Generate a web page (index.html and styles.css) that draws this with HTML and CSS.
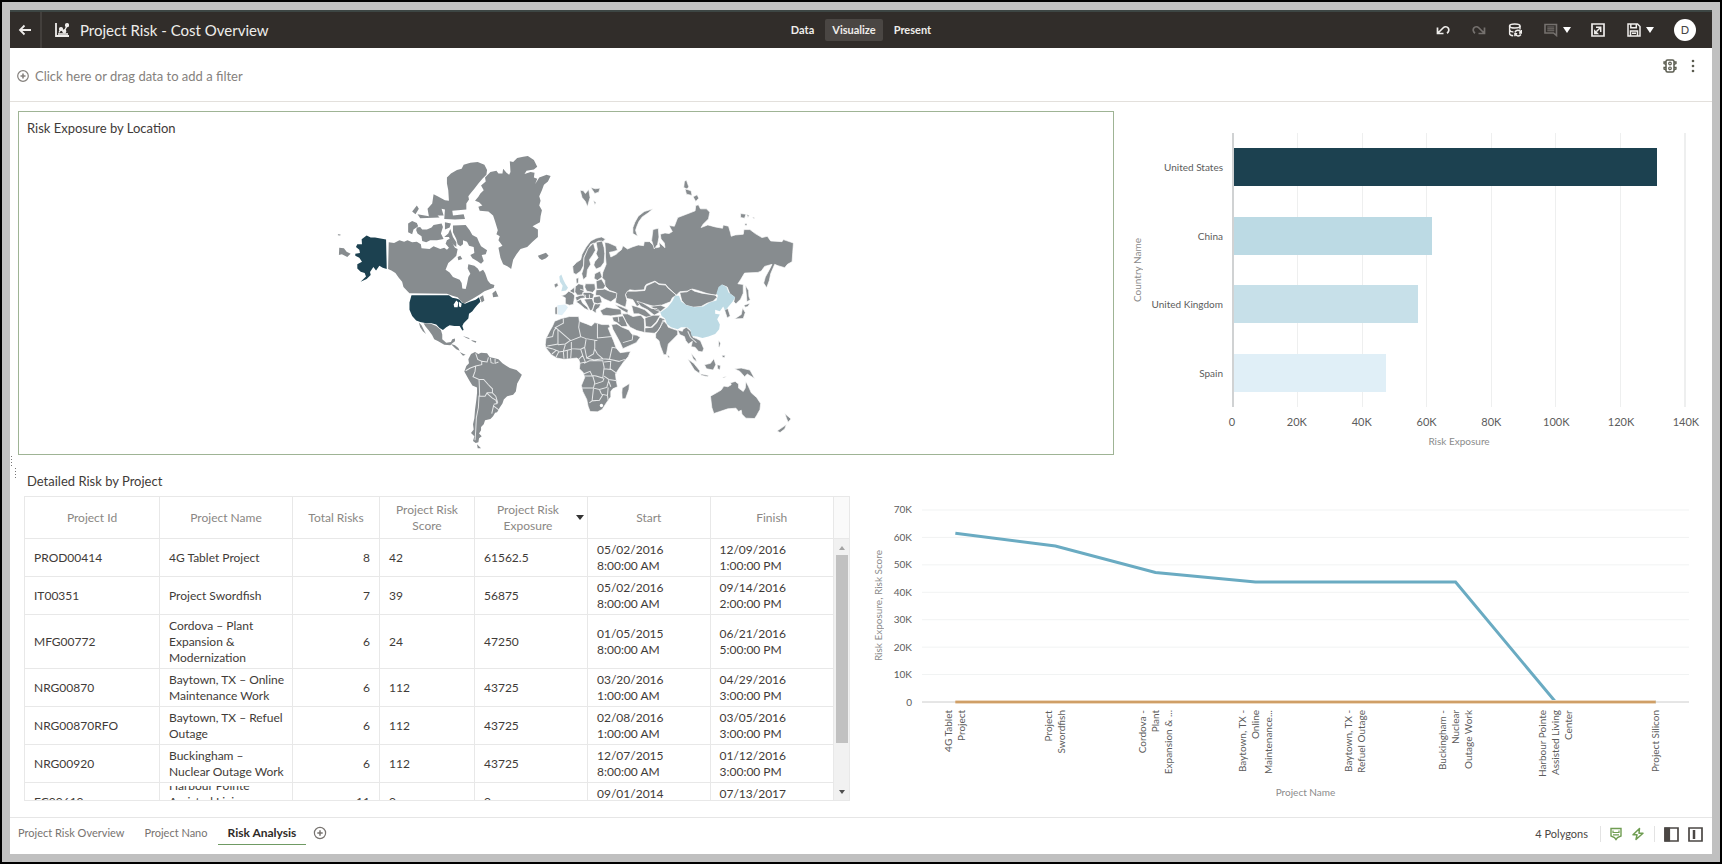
FILE: index.html
```html
<!DOCTYPE html>
<html lang="en">
<head>
<meta charset="utf-8">
<title>Project Risk - Cost Overview</title>
<link rel="stylesheet" href="styles.css">
</head>
<body>
<div class="app">
  <header class="topbar">
    <div class="topbar-left">
      <button class="icon-btn back" aria-label="Back"><svg width="14" height="12" viewBox="0 0 14 12" class="ico"><path d="M13 6H2M6.500 1.500L2 6l4.500 4.500" stroke-width="1.800"/></svg></button>
      <svg class="ico brand" width="14" height="14" viewBox="0 0 14 14"><path d="M1 0v13h13" stroke-width="1.800"/><path d="M4 9.500L6 6l3 2.500 3.500-6.500" stroke-width="1.400"/><circle cx="6" cy="6" r="1.500" fill="currentColor"/><circle cx="9.300" cy="8.300" r="1.500" fill="currentColor"/><circle cx="12" cy="2.200" r="1.500" fill="currentColor"/><path d="M3 11h10" stroke-width="1.600"/></svg>
      <h1>Project Risk - Cost Overview</h1>
    </div>
    <nav class="modes">
      <button>Data</button>
      <button class="active">Visualize</button>
      <button>Present</button>
    </nav>
    <div class="topbar-right">
      <button class="icon-btn" aria-label="Undo"><svg width="14" height="14" viewBox="0 0 14 14" class="ico"><path d="M1.500 4.500v6h6M2 10l5-5c1.800-1.800 4-1.500 5.200 0 1.100 1.500.8 3.800-1.200 5.200" stroke-width="1.700"/></svg></button>
      <button class="icon-btn dim" aria-label="Redo"><svg width="14" height="14" viewBox="0 0 14 14" class="ico"><path d="M12.500 4.500v6h-6M12 10L7 5C5.200 3.200 3 3.500 1.800 5 .7 6.500 1 8.800 3 10.200" stroke-width="1.700"/></svg></button>
      <button class="icon-btn" aria-label="Refresh data"><svg width="14" height="14" viewBox="0 0 14 14" class="ico"><ellipse cx="6.800" cy="3" rx="5.200" ry="2" stroke-width="1.600"/><path d="M1.600 3v7.500c0 1.200 1.500 2.100 3.600 2.300M12 3v3.500M1.600 7c.6 1.300 2 1.900 3.800 2M7 9.500c.8-3 5-3 5.800 0M13.500 7v3H11M12.900 11.500c-1.400 2.100-4.400 1.800-5.400-.2M6.900 13.300v-2.500h2.300" stroke-width="1.400"/></svg></button>
      <button class="icon-btn dim wide" aria-label="Comments"><svg width="14" height="14" viewBox="0 0 14 14" class="ico"><path d="M1 1.500h11.500v11L9.500 10H1z" stroke-width="1.600"/><path d="M3.300 4h7M3.300 5.900h7M3.300 7.800h7" stroke-width="1.100"/></svg><span class="caret"></span></button>
      <button class="icon-btn" aria-label="Export"><svg width="14" height="14" viewBox="0 0 14 14" class="ico"><path d="M1 1h12v12H1z" stroke-width="1.700"/><path d="M5 4.300h4.700V9M9.500 4.500L5.500 8.500M3.800 10.500V8l2.500 2.500z" stroke-width="1.500"/></svg></button>
      <button class="icon-btn wide" aria-label="Save"><svg width="14" height="14" viewBox="0 0 14 14" class="ico"><path d="M1 1h9.500L13 3.500V13H1zM3.800 1v3.800h5.500V1M3.500 13V8h7v5M5 10.300h4" stroke-width="1.500"/></svg><span class="caret"></span></button>
      <button class="avatar">D</button>
    </div>
  </header>

  <section class="filterbar">
    <button class="add-filter"><svg width="12" height="12" viewBox="0 0 12 12" class="ico"><circle cx="6" cy="6" r="5.300"/><path d="M6 3.500v5M3.500 6h5" stroke-width="1.600"/></svg>Click here or drag data to add a filter</button>
    <div class="filter-tools">
      <button class="icon-btn" aria-label="Brushing"><svg width="14" height="14" viewBox="0 0 14 14" class="ico"><rect x="3" y="1" width="8" height="12" rx="1.500" stroke-width="1.500"/><circle cx="7" cy="4.500" r="1.300"/><circle cx="7" cy="9.300" r="1.300"/><path d="M3 3H1v1.500l2 1M3 8.500H1V10l2 1M11 3h2v1.500l-2 1M11 8.500h2V10l-2 1" stroke-width="1.300"/></svg></button>
      <button class="icon-btn" aria-label="Menu"><svg width="4" height="14" viewBox="0 0 4 14"><g fill="currentColor"><circle cx="2" cy="2" r="1.300"/><circle cx="2" cy="7" r="1.300"/><circle cx="2" cy="12" r="1.300"/></g></svg></button>
    </div>
  </section>

  <main class="canvas">
    <i class="grip grip-outer"></i><i class="grip grip-inner"></i>
    <div class="row row-top">
      <section class="panel map-panel">
        <h2>Risk Exposure by Location</h2>
        <svg class="map" viewBox="36 36 1400 900" role="img" aria-label="World map">
          <g class="land">
            <path d="M58 322L72 324 80 334 92 340 82 350 66 342 57 344ZM54 282l8 1-1 3-7-1Z"/>
            <path d="M206 306L222 308 238 300 252 304 262 300 276 306 290 304 302 312 304 324 328 326 340 318 360 326 372 322 380 328 386 322 376 310 380 300 390 294 398 312 404 322 412 326 408 346 398 356 384 368 376 388 388 396 398 410 418 418 424 428 426 444 436 446 440 430 444 410 450 400 442 384 444 372 462 376 472 384 478 394 488 388 494 398 502 420 510 430 522 434 520 442 510 446 492 452 478 462 462 472 448 480 430 490 424 484 412 470 396 466 380 460 268 458 262 452 250 440 246 424 236 412 226 398 214 390 204 386Z"/>
            <path d="M516 458L526 450 530 460 534 468 518 470ZM478 470L488 464 492 480 484 486ZM412 350L420 346 426 356 414 360Z"/>
            <path d="M310 548L334 550 348 556 362 568 366 582 366 596 378 606 392 604 396 596 404 594 404 602 396 608 390 614 372 612 354 602 342 596 336 584 326 570 316 558ZM296 546L304 554 314 574 318 580 308 572 300 560ZM392 610L404 614 414 622 418 630 408 626 400 618ZM418 634L430 640 436 642 428 645ZM428 586L446 592 448 596 438 592ZM452 598L468 602 466 606 456 602Z"/>
            <path d="M464 182L474 170 480 160 490 150 482 136 496 124 494 112 510 96 528 92 534 100 546 100 548 86 558 98 566 104 570 96 568 64 578 66 590 54 608 50 622 48 640 60 650 80 640 88 618 92 612 102 630 96 642 98 640 112 650 116 644 132 656 112 678 104 690 108 682 124 670 134 664 150 656 168 660 182 656 196 664 210 660 228 658 246 636 258 652 268 652 290 636 304 620 320 600 326 588 342 578 358 572 386 562 378 548 372 540 352 534 322 546 316 534 300 538 288 528 282 532 270 524 244 518 226 504 214 478 212 474 200 486 196 476 186Z"/>
            <path d="M380 112L392 100 410 90 424 86 430 74 450 68 472 66 492 74 500 90 498 104 486 116 474 130 462 146 452 158 444 168 446 178 438 190 438 208 396 212 398 226 430 222 434 236 404 238 372 236 374 208 364 206 370 226 352 226 358 232 300 234 292 222 326 228 322 206 336 190 340 162 352 168 374 180 386 182 384 150 380 130Z"/>
            <path d="M276 214L290 196 296 206 286 222ZM264 250L276 242 290 248 294 258 280 268 276 282 264 276ZM290 262L300 260 306 268 320 268 334 262 340 254 364 250 368 260 362 280 370 296 350 300 330 300 318 306 306 302 304 288 292 280 288 270ZM374 246L392 250 388 262 374 268ZM372 290L384 280 390 266 398 290 408 306 408 320 396 310 386 290Z"/>
            <path d="M398 256L436 254 448 270 456 284 470 292 476 306 482 318 500 330 496 342 484 344 490 362 482 370 470 362 456 354 450 344 462 338 460 320 446 316 440 304 428 300 428 312 420 318 412 312 408 296 398 276Z"/>
            <path d="M652 346L664 342 676 337 684 346 676 354 664 359 656 354Z"/>
            <path d="M444 656L452 640 464 634 474 640 482 636 500 638 508 650 520 652 534 656 546 668 556 674 568 682 588 688 604 702 598 714 590 728 586 752 578 762 560 766 550 776 546 788 538 800 530 814 524 816 518 826 510 834 494 838 490 850 482 858 482 868 476 878 484 886 476 892 474 904 466 906 458 900 462 886 452 876 460 866 458 850 462 832 464 806 468 776 470 756 470 740 456 734 446 718 436 700 432 692 438 676 446 668ZM470 910L482 922 472 922Z"/>
          </g>
          <path class="edges" d="M466 638L472 656 484 662 484 672 466 676 450 682 436 690M484 662L500 664 504 650M510 652L512 666 520 668M524 654V668L534 664M466 676L464 692 458 708 476 716 490 716 504 732 516 744 516 756 500 756 494 766 478 766 476 716M500 758L516 772 526 778 530 788 520 790M516 756L526 766 532 786M520 796L536 808M520 792L514 818M476 764L474 800 468 830 466 870 464 898"/>
          <path class="top-risk" d="M125 297L140 286 152 292 165 292 198 298 200 386 188 382 178 376 168 390 160 380 150 395 152 404 140 416 122 424 138 408 134 398 122 394 112 384 112 372 126 364 118 352 106 346 106 340 120 338 118 328 108 320 112 312 126 312Z"/>
          <path class="top-risk" d="M274 464L386 464 396 472 408 474 418 478 424 486 434 490 448 484 466 478 476 470 480 484 470 494 462 504 456 512 446 520 444 534 430 548 426 556 430 568 426 570 418 556 402 556 388 554 378 560 368 568 358 562 348 552 334 548 318 548 300 544 288 540 276 526 268 508 268 486Z"/>
          <path class="water" d="M400 492L408 480 414 486 412 500 402 500ZM416 484L424 490 422 500 416 498Z"/>
          <g transform="translate(630 0)">
            <g class="land lined">
              <path d="M148 150L158 152 164 160 174 148 178 172 170 200 164 184 154 172ZM180 142L194 146 208 144 204 156 192 160ZM188 180l8 8-4 6Z"/>
              <path d="M306 262L312 246 322 228 340 214 366 206 352 218 334 230 324 244 318 258 314 270 320 288 306 280Z"/>
              <path d="M460 124L466 120 473 140 468 147 458 142ZM462 146L480 152 483 166 466 162ZM486 170L498 164 503 174 494 184ZM628 220L644 222 640 234 628 232ZM646 222l8 4-4 6ZM641 250h6v6h-6ZM664 230l8 3-6 2Z"/>
              <path d="M126 378L138 366 150 358 154 342 166 320 180 302 196 294 212 290 224 296 216 304 204 302 194 308 180 312 170 330 160 350 158 376 150 392 136 402 128 398Z"/>
              <path d="M160 352L172 324 188 308 194 330 186 344 176 358 180 372 170 388 168 408 158 418 153 400 158 384Z"/>
              <path d="M196 306L214 302 220 322 222 340 220 366 210 380 196 386 189 374 192 364 202 352 196 340 200 328Z"/>
              <path d="M222 306L234 308 256 318 260 330 246 334 236 336 240 350 256 342 262 336 272 328 276 316 290 326 304 320 322 314 338 316 340 304 356 304 364 312 376 322 386 320 384 306 402 322 400 308 390 296 388 282 402 278 414 280 424 274 414 256 430 258 440 232 466 222 492 212 494 196 502 194 508 206 526 206 536 216 532 236 516 252 510 262 530 254 552 260 574 264 576 254 592 258 598 278 600 288 612 284 636 282 638 268 656 268 672 280 692 292 708 288 718 302 752 304 756 298 786 308 784 336 782 364 768 372 760 382 740 376 730 372 718 400 714 420 706 442 697 428 702 410 716 384 722 372 700 378 690 392 680 396 640 398 628 418 620 430 636 432 636 458 628 476 614 490 608 484 610 470 596 460 588 440 574 434 564 442 562 458 552 464 530 460 500 450 484 446 468 452 446 454 436 464 410 440 404 432 384 430 372 422 346 432 342 438 340 448 312 450 296 448 284 462 288 480 284 500 270 494 254 486 256 470 254 456 236 450 222 436 222 420 214 412 216 396 226 372 224 350 224 330Z"/>
              <path d="M366 268L382 264 384 290 380 312 370 326 362 300Z"/>
              <path d="M642 434L652 450 653 468 657 478 647 484 645 460ZM638 494L656 488 650 498 642 500ZM634 502L642 516 636 534 610 535 630 522Z"/>
              <path d="M290 452L316 452 342 450 346 436 372 424 384 432 404 434 410 442 436 464 424 472 418 484 392 494 370 498 356 494 336 488 318 498 306 478 300 476 288 474 284 462Z"/>
              <path d="M446 456L468 454 480 446 490 452 512 458 552 464 558 470 546 482 528 488 510 498 486 500 464 494 452 480Z"/>
              <path d="M580 508L590 504 597 526 588 532Z"/>
              <path d="M70 432l10-5 3 8-9 8ZM73 500l7-2v24l-7-1ZM136 414l8-2-1 16-6 1Z"/>
              <path d="M92 466L104 462 114 452 126 458 132 466 130 480 128 492 116 494 104 490 104 472ZM116 452L132 440 132 456 128 458ZM134 438L144 430 158 434 160 452 154 464 140 464 132 454ZM164 430L192 430 194 446 186 456 168 452 162 440ZM134 470L150 464 164 464 164 472 150 474 138 482ZM136 484L150 476 156 488 170 500 174 510 162 504 148 492ZM156 456L180 456 190 462 186 474 168 474 158 466ZM160 476L184 474 190 490 186 508 178 510 170 494ZM188 470L208 466 214 486 200 490 188 486ZM192 490L210 490 206 500 196 508 196 518 184 510ZM196 448L222 446 236 452 258 458 256 472 240 484 222 476 206 466 194 464ZM196 422L212 416 224 436 218 446 198 446ZM192 400L208 392 214 410 200 420 190 414Z"/>
              <path d="M208 510L228 500 250 504 270 506 272 522 240 526 216 524ZM252 492L270 498 292 508 290 518 268 506Z"/>
              <path d="M244 530L276 526 284 540 290 558 272 558 258 546 248 542ZM242 552L258 550 274 560 294 568 304 582 318 584 328 590 316 606 294 616 276 624 268 606 256 584 246 566ZM274 520L290 520 306 528 330 524 340 536 342 576 318 570 298 560 284 542Z"/>
              <path d="M302 494L322 500 342 508 364 528 346 530 324 520 308 520ZM318 482L336 488 362 504 378 504 388 514 370 524 350 508 330 498ZM358 498L388 494 404 500 388 514 374 508Z"/>
              <path d="M342 532L366 524 388 524 376 544 360 560 344 558ZM342 562L364 560 378 546 386 530 402 536 392 552 380 572 370 578 342 576ZM374 580L388 560 396 538 408 552 412 560 440 570 440 582 424 598 412 610 406 642 398 642 388 616 384 600 374 592ZM410 644l5 2v5h-4Z"/>
              <path d="M440 568L454 572 456 566 466 560 480 572 486 590 496 594 508 600 518 624 514 634 502 632 492 620 480 618 484 602 472 610 464 600 460 588 446 582Z"/>
              <path d="M480 638L494 654 497 664 486 654ZM470 655L488 668 506 690 505 698 490 688ZM508 699L532 704 530 708 512 704ZM520 672L538 668 548 654 554 672 546 688 526 684ZM558 672l10 2-2 14-7-5ZM562 598l6 10-3 12-3-2ZM572 644l10 0-2 7-6-1ZM574 710l14-4-10 6Z"/>
              <path d="M610 684L630 682 656 688 670 713 648 700 640 708 626 692Z"/>
              <path d="M538 766L556 756 570 748 578 736 590 738 600 732 598 726 612 722 622 730 622 742 636 752 642 742 644 722 652 738 660 756 676 770 688 788 686 806 676 824 670 833 644 832 632 820 630 808 622 812 614 802 590 804 566 812 548 818 542 800Z"/>
              <path d="M760 818L772 828 779 834 770 844 766 834ZM737 870L752 860 765 851 760 864 746 875Z"/>
              <path d="M72 542L92 534 116 528 144 528 146 542 168 550 182 556 192 546 214 552 234 552 238 560 232 562 240 582 248 600 256 622 268 636 299 632 292 648 278 664 264 684 254 700 256 718 260 738 246 744 240 752 240 768 228 784 214 806 200 813 178 812 172 796 168 776 156 752 152 734 162 710 158 696 146 684 148 668 144 656 138 652 120 654 100 656 78 652 62 642 46 622 44 612 46 594 56 574 66 556Z"/>
              <path d="M274 742L296 728 294 746 284 774 274 774 273 756Z"/>
            </g>
            <path class="edges" d="M72 562L98 548V534M76 562L120 600M146 542L144 560 150 588 120 600M82 568V610L50 616M46 592L66 588 70 570 76 562M82 612L104 610 118 600M104 612L98 632M150 588L166 594 200 600M200 550V592L244 588M166 596L162 620 150 626 122 624V604M192 598V622L188 640 168 652 162 622M192 626L200 640 216 654 236 656 244 620 256 622M122 626L120 654M150 626L156 644 144 656M98 632L122 626M76 650L84 634 98 632 100 654M110 654V630M64 640L76 630M46 620L64 624 84 632M156 644L164 664 146 668M168 652L190 658 216 654M160 668L176 660 216 660 220 680 216 712 196 706 184 704 178 692 158 700M236 656L264 662 282 656M240 660L238 684 258 698M220 664L240 662M220 684L240 686M220 706L234 716 258 720M162 706L186 706 192 726 188 742 154 742M192 730L216 722 220 712M234 718L228 740 206 746 188 742M234 722L240 738M206 746L212 760 230 764 232 740M188 744L184 780 206 778 216 762M184 780L176 786M230 764L232 778M262 528L264 544M276 606L304 598 306 582M148 446l12 4M176 462v12M470 572L478 590 496 606"/>
            <circle class="water" cx="212" cy="794" r="5"/>
            <path class="second-risk" d="M388 516L410 500 424 482 432 466 444 466 450 482 466 494 490 500 516 498 536 486 556 480 560 466 556 458 562 440 572 432 586 440 592 456 612 470 604 484 592 498 582 510 576 498 566 512 552 508 552 520 566 522 558 536 566 552 564 566 552 580 532 588 514 592 498 588 482 586 478 568 468 560 450 560 440 566 420 560 408 550 402 534 392 526Z"/>
            <path class="third-risk" d="M86 408L92 402 98 418 104 430 112 442 106 450 92 452 96 436 88 424Z"/>
            <path class="fourth-risk" d="M80 494L104 492 112 500 104 512 94 524 82 522V508Z"/>
          </g>
        </svg>
      </section>

      <section class="bar-chart">
        <div class="y-title"><span>Country Name</span></div>
        <div class="bar-names"><span>United States</span><span>China</span><span>United Kingdom</span><span>Spain</span></div>
        <div class="bar-plot">
          <div class="bar-slot"><div class="bar b1" style="width:93.800%"></div></div>
          <div class="bar-slot"><div class="bar b2" style="width:44%"></div></div>
          <div class="bar-slot"><div class="bar b3" style="width:40.700%"></div></div>
          <div class="bar-slot"><div class="bar b4" style="width:33.800%"></div></div>
        </div>
        <div class="bar-ticks"><span>0</span><span>20K</span><span>40K</span><span>60K</span><span>80K</span><span>100K</span><span>120K</span><span>140K</span></div>
        <div class="x-title">Risk Exposure</div>
      </section>
    </div>

    <div class="row row-bottom">
      <section class="table-panel">
        <h2>Detailed Risk by Project</h2>
        <div class="table-box">
          <div class="table-clip">
            <table>
              <colgroup><col class="c-id"><col class="c-name"><col class="c-total"><col class="c-score"><col class="c-exp"><col class="c-date"><col class="c-date"></colgroup>
              <thead><tr><th>Project Id</th><th>Project Name</th><th>Total Risks</th><th>Project Risk Score</th><th class="sorted">Project Risk Exposure<span class="caret"></span></th><th>Start</th><th>Finish</th></tr></thead>
              <tbody>
                <tr><td>PROD00414</td><td>4G Tablet Project</td><td class="num">8</td><td>42</td><td>61562.5</td><td>05/02/2016<br>8:00:00 AM</td><td>12/09/2016<br>1:00:00 PM</td></tr>
                <tr><td>IT00351</td><td>Project Swordfish</td><td class="num">7</td><td>39</td><td>56875</td><td>05/02/2016<br>8:00:00 AM</td><td>09/14/2016<br>2:00:00 PM</td></tr>
                <tr><td>MFG00772</td><td>Cordova – Plant Expansion &amp; Modernization</td><td class="num">6</td><td>24</td><td>47250</td><td>01/05/2015<br>8:00:00 AM</td><td>06/21/2016<br>5:00:00 PM</td></tr>
                <tr><td>NRG00870</td><td>Baytown, TX – Online Maintenance Work</td><td class="num">6</td><td>112</td><td>43725</td><td>03/20/2016<br>1:00:00 AM</td><td>04/29/2016<br>3:00:00 PM</td></tr>
                <tr><td>NRG00870RFO</td><td>Baytown, TX – Refuel Outage</td><td class="num">6</td><td>112</td><td>43725</td><td>02/08/2016<br>1:00:00 AM</td><td>03/05/2016<br>3:00:00 PM</td></tr>
                <tr><td>NRG00920</td><td>Buckingham –<br>Nuclear Outage Work</td><td class="num">6</td><td>112</td><td>43725</td><td>12/07/2015<br>8:00:00 AM</td><td>01/12/2016<br>3:00:00 PM</td></tr>
                <tr><td>EC00610</td><td><div class="cut"><span>Harbour Pointe<br>Assisted Living<br>Center</span></div></td><td class="num">11</td><td>0</td><td>0</td><td>09/01/2014<br>8:00:00 AM</td><td>07/13/2017<br>5:00:00 PM</td></tr>
              </tbody>
            </table>
          </div>
          <div class="scroll">
            <div class="scroll-head"></div>
            <div class="scroll-track"><span class="arrow up"></span><div class="thumb"></div><span class="arrow down"></span></div>
          </div>
        </div>
      </section>

      <section class="line-chart">
        <div class="y-title"><span>Risk Exposure, Risk Score</span></div>
        <div class="line-ticks"><span>70K</span><span>60K</span><span>50K</span><span>40K</span><span>30K</span><span>20K</span><span>10K</span><span>0</span></div>
        <svg class="line-plot" viewBox="0 0 690 70" preserveAspectRatio="none">
          <path class="grid" d="M0 0H690M0 10H690M0 20H690M0 30H690M0 40H690M0 50H690M0 60H690"/>
          <path class="axis" d="M0 70H690"/>
          <path class="exposure" d="M30 8.438L120 13.125 210 22.750 300 26.275H480L570 70H660"/>
          <path class="score-glow" d="M30 70H660"/>
          <path class="score" d="M30 70H660"/>
        </svg>
        <div class="line-names">
          <span>4G Tablet<br>Project</span><span>Project<br>Swordfish</span><span>Cordova -<br>Plant<br>Expansion &amp; ...</span><span>Baytown, TX -<br>Online<br>Maintenance...</span><span>Baytown, TX -<br>Refuel Outage</span><span>Buckingham -<br>Nuclear<br>Outage Work</span><span>Harbour Pointe<br>Assisted Living<br>Center</span><span>Project Silicon</span>
        </div>
        <div class="x-title">Project Name</div>
      </section>
    </div>
  </main>

  <footer class="tabs">
    <nav>
      <a href="#overview">Project Risk Overview</a>
      <a href="#nano">Project Nano</a>
      <a href="#risk" class="current">Risk Analysis</a>
      <button class="icon-btn" aria-label="Add canvas"><svg width="14" height="14" viewBox="0 0 14 14" class="ico"><circle cx="7" cy="7" r="5.600"/><path d="M7 4.300v5.400M4.300 7h5.400" stroke-width="1.500"/></svg></button>
    </nav>
    <div class="status">
      <span>4 Polygons</span>
      <i class="sep"></i>
      <button class="icon-btn green" aria-label="Data status"><svg width="12" height="14" viewBox="0 0 12 14" class="ico"><path d="M1 1.500h10V9L7.500 10.500 6 12.500 4.500 10.500 1 9z" stroke-width="1.400"/><path d="M3 3.500v2h6v-2M3 7.800h6" stroke-width="1.200"/></svg></button>
      <button class="icon-btn green" aria-label="Auto apply"><svg width="14" height="14" viewBox="0 0 14 14" class="ico"><path d="M8.500 1.500L2 7.800h4L5 12.500l7-6.300H8z" stroke-width="1.500" stroke-linejoin="round"/></svg></button>
      <i class="sep"></i>
      <button class="icon-btn" aria-label="Left panel"><svg width="15" height="15" viewBox="0 0 15 15" class="ico"><path d="M1 1h13v13H1z" stroke-width="1.700"/><path d="M1 1h4.500v13H1z" fill="currentColor"/></svg></button>
      <button class="icon-btn" aria-label="Middle panel"><svg width="15" height="15" viewBox="0 0 15 15" class="ico"><path d="M1 1h13v13H1z" stroke-width="1.700"/><path d="M6 3v9" stroke-width="2.500"/></svg></button>
    </div>
  </footer>
</div>
</body>
</html>
```
FILE: styles.css
```css
* { box-sizing: border-box; }
html, body { margin: 0; }
body {
  height: 100vh;
  border: 2px solid #000;
  padding: 8px;
  background: #c0c0c0;
  font: 12px/16px Lato, "Open Sans", sans-serif;
  color: #3f3b38;
}
h1, h2 { margin: 0; font-weight: 400; }
button { border: 0; padding: 0; background: none; color: inherit; font: inherit; }
a { color: inherit; text-decoration: none; }

.app { height: 100%; background: #fff; display: flex; flex-direction: column; }
.ico { fill: none; stroke: currentColor; stroke-width: 1.2; display: block; }
.icon-btn { display: flex; align-items: center; gap: 4px; }
.caret { border: 4px solid transparent; border-top: 6px solid #fff; border-bottom: 0; }

.topbar {
  height: 38px;
  flex: none;
  background: #312d2a;
  border-top: 2px solid #3d4644;
  color: #efedeb;
  display: grid;
  grid-template-columns: 1fr auto 1fr;
  align-items: center;
}
.topbar-left { display: flex; align-items: center; height: 100%; }
.back { width: 32px; height: 100%; justify-content: center; border-right: 2px solid #433f3c; }
.brand { margin: 0 11px 0 13px; }
h1 { font-size: 15px; line-height: 20px; }
.modes { display: flex; gap: 4px; font-weight: 700; font-size: 11px; }
.modes button { padding: 3px 7px; border-radius: 2px; }
.modes .active { background: #4a4643; }
.topbar-right { display: flex; justify-content: flex-end; align-items: center; gap: 22px; padding-right: 16px; }
.topbar-right .wide { gap: 5px; margin-right: -2px; }
.dim .ico { color: #75716e; }
.avatar { width: 22px; height: 22px; border-radius: 50%; background: #fff; color: #444; font-size: 11px; }

.filterbar {
  height: 54px;
  flex: none;
  border-bottom: 1px solid #e3e0dc;
  display: flex;
  justify-content: space-between;
  padding: 11px 17px 0 7px;
}
.add-filter { display: flex; align-items: center; align-self: flex-start; gap: 6px; margin-top: 8px; font-size: 13px; line-height: 18px; color: #85817d; }
.filter-tools { display: flex; align-self: flex-start; gap: 14px; color: #5b5c50; }

.canvas { flex: 1; min-height: 0; position: relative; padding: 9px 0 0 8px; display: flex; flex-direction: column; }
.row { display: grid; }
.row-top { flex: 344 1 0; min-height: 0; grid-template-columns: 1096fr 598fr; }
.row-bottom { flex: 362 1 0; min-height: 0; grid-template-columns: 840fr 854fr; }
.grip { position: absolute; width: 3px; height: 13px; background: radial-gradient(circle, #777 1px, transparent 1px) 0 0 / 3px 3px; }
.grip-outer { left: 0; top: 353px; }
.grip-inner { left: 4px; top: 365px; }
h2 { font-size: 13px; line-height: 18px; }

.map-panel { border: 1px solid #9fb495; display: flex; flex-direction: column; min-height: 0; padding-bottom: 1px; }
.map-panel h2 { padding: 7px 8px 15px; }
.map { flex: 1; min-height: 0; width: 100%; }
.land { fill: #878c8f; }
.lined { stroke: #fff; stroke-width: 2; }
.edges { fill: none; stroke: #e6e8e9; stroke-width: 3; }
.water { fill: #fff; }
.top-risk, .b1 { fill: #1c4150; background: #1c4150; }
.second-risk, .b2 { fill: #bcdae4; background: #bcdae4; }
.third-risk, .b3 { fill: #c7e0e9; background: #c7e0e9; }
.fourth-risk, .b4 { fill: #e0eff7; background: #e0eff7; }

.y-title { display: flex; align-items: center; justify-content: center; color: #8b8b8b; font-size: 10px; }
.y-title span { writing-mode: vertical-rl; transform: rotate(180deg); white-space: nowrap; }
.x-title { text-align: center; color: #8b8b8b; font-size: 10px; }

.bar-chart {
  display: grid;
  grid-template: "y names plot" 1fr ". . ticks" 27px ". . title" 21px / 18px 86px 1fr;
  padding: 22px 26px 0 14px;
  font-size: 11px;
  line-height: 14px;
  color: #5c5c5c;
}
.bar-names { display: grid; grid-template-rows: repeat(4, 1fr); align-items: center; text-align: right; padding-right: 9px; white-space: nowrap; font-size: 10px; }
.bar-plot {
  display: grid;
  grid-template-rows: repeat(4, 1fr);
  border-left: 2px solid #d0d2d3;
  border-right: 1px solid #eeefef;
  background: repeating-linear-gradient(90deg, transparent 0 calc(100% / 7 - 1px), #eeefef calc(100% / 7 - 1px) calc(100% / 7));
}
.bar-slot { display: flex; align-items: center; }
.bar { height: 38px; }
.bar-ticks { grid-area: ticks; display: flex; justify-content: space-between; padding-top: 8px; margin: 0 -18px; }
.bar-ticks span { width: 36px; text-align: center; }
.bar-chart .x-title { grid-area: title; }

.table-panel { display: flex; flex-direction: column; min-height: 0; padding: 17px 0 16px 6px; }
.table-panel h2 { padding: 0 3px 6px; }
.table-box { flex: 1; min-height: 0; display: flex; border: 1px solid #e8e8e8; margin-right: 8px; }
.table-clip { flex: 1; overflow: hidden; }
table { width: 100%; border-collapse: separate; border-spacing: 0; table-layout: fixed; }
.c-id { width: 135px; }
.c-name { width: 133px; }
.c-total { width: 87px; }
.c-score { width: 95px; }
.c-exp { width: 113px; }
th, td { border-right: 1px solid #e8e8e8; border-bottom: 1px solid #e8e8e8; }
th { height: 42px; padding: 0 12px; font-weight: 400; color: #8a8784; position: relative; }
.sorted { padding: 0 22px 0 16px; }
th .caret { position: absolute; right: 3px; top: 18px; border-top-color: #333; border-top-width: 5px; }
td { padding: 3px 4px 2px 9px; height: 38px; }
tr > :last-child { border-right: 0; }
td.num { text-align: right; padding-right: 9px; }
.cut { height: 32px; display: flex; align-items: center; overflow: hidden; }
.scroll { width: 16px; display: flex; flex-direction: column; border-left: 1px solid #e8e8e8; }
.scroll-head { height: 42px; background: #fafafa; border-bottom: 1px solid #e8e8e8; }
.scroll-track { flex: 1; background: #f1f1f1; display: flex; flex-direction: column; align-items: center; }
.arrow { border: 3px solid transparent; }
.up { border-top: 0; border-bottom: 4px solid #a3a3a3; margin: 7px 0 5px; }
.thumb { width: 12px; height: 188px; background: #c1c1c1; }
.down { border-bottom: 0; border-top: 4px solid #505050; margin: auto 0 6px; }

.line-chart {
  display: grid;
  grid-template: "y ticks plot" 192px ". . names" 84px ". . title" 16px / 20px 34px 1fr;
  align-content: start;
  padding: 55px 23px 0 10px;
  font-size: 10px;
  line-height: 13px;
  color: #5c5c5c;
}
.line-ticks { display: flex; flex-direction: column; justify-content: space-between; margin: -7px 0; padding-right: 10px; text-align: right; }
.line-plot { width: 100%; height: 100%; overflow: visible; }
.line-plot path { fill: none; vector-effect: non-scaling-stroke; }
.grid { stroke: #f1f3f3; }
.line-plot .axis { stroke: #ccc; }
.exposure { stroke: #6aabc2; stroke-width: 3; }
.score-glow { stroke: #eed9c0; stroke-width: 4; }
.score { stroke: #cf9f67; stroke-width: 2; }
.line-names { grid-area: names; display: flex; justify-content: space-between; align-items: flex-start; padding-top: 8px; }
.line-names span { width: 8.6957%; display: grid; writing-mode: vertical-rl; transform: rotate(180deg); text-align: right; align-content: center; height: max-content; white-space: nowrap; }
.line-chart .x-title { grid-area: title; }

.tabs { height: 37px; flex: none; border-top: 1px solid #e6e6e6; display: flex; justify-content: space-between; color: #777370; font-size: 11px; }
.tabs nav, .status { display: flex; align-items: center; }
.tabs nav { align-items: flex-start; }
.tabs a { margin-top: 4px; padding: 3px 10px 2px; height: 23px; }
.tabs nav a:first-child { padding-left: 8px; }
.tabs .current { font-weight: 700; font-size: 12px; color: #2f2b28; border-bottom: 1px solid #6f9a63; }
.tabs nav .icon-btn { margin: 8px 0 0 7px; }
.status { gap: 9px; padding: 0 9px 4px 0; color: #4b4744; }
.status span { padding-right: 3px; }
.sep { width: 1px; height: 16px; background: #e3e3e3; }
.green { color: #6f9d52; }
```
